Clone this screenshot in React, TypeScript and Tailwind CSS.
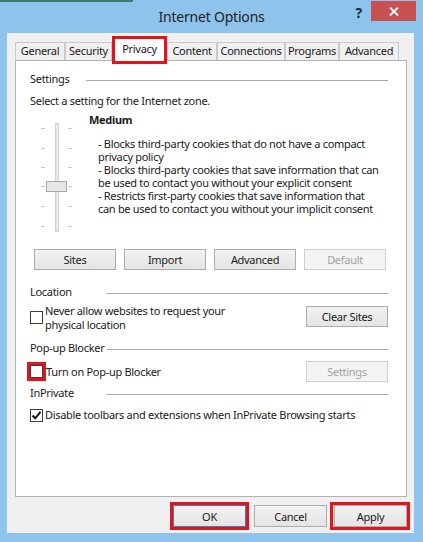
import React from "react";

function Btn({
  children,
  disabled,
  className,
}: {
  children: React.ReactNode;
  disabled?: boolean;
  className?: string;
}) {
  return (
    <div
      className={
        "flex items-center justify-center border leading-none " +
        (disabled
          ? "border-[#cfcfcf] bg-[#f4f4f4] text-[#a2a2a2] "
          : "border-[#adadad] bg-gradient-to-b from-[#f2f2f2] to-[#e4e4e4] text-[#1a1a1a] ") +
        (className ?? "")
      }
    >
      {children}
    </div>
  );
}

function Check({ checked }: { checked?: boolean }) {
  return (
    <div className="w-[13px] h-[13px] border border-[#3c3c3c] bg-white flex items-center justify-center shrink-0">
      {checked && (
        <svg width="11" height="11" viewBox="0 0 11 11">
          <path d="M1.5 5.5 L4.2 8.3 L9.5 1.8" fill="none" stroke="#111" strokeWidth="2" />
        </svg>
      )}
    </div>
  );
}

function GroupLabel({ label, w }: { label: string; w: string }) {
  return (
    <div className="flex items-center h-[14px] pr-[18px]">
      <div className={"shrink-0 leading-[14px] whitespace-nowrap " + w}>{label}</div>
      <div className="flex-1 h-px bg-[#a9a9a9] mt-[2px]" />
    </div>
  );
}

function Slider() {
  const ticks = [7, 27, 46, 65, 85, 105];
  return (
    <svg width="36" height="112" viewBox="0 0 36 112">
      {ticks.map((y) => (
        <g key={y}>
          <rect x="1" y={y} width="4" height="1" fill="#c8c8c8" />
          <rect x="28" y={y} width="4" height="1" fill="#c8c8c8" />
        </g>
      ))}
      <rect x="15.5" y="2.5" width="3" height="108" fill="#e8e8e8" stroke="#d4d4d4" />
      <rect x="6.5" y="60.5" width="20" height="10" fill="#e6e6e6" stroke="#a9a9a9" />
    </svg>
  );
}

export default function App() {
  const tabs: { label: string; w: string; sel?: boolean }[] = [
    { label: "General", w: "w-[50px]" },
    { label: "Security", w: "w-[47px]" },
    { label: "Privacy", w: "w-[55px]", sel: true },
    { label: "Content", w: "w-[50px]" },
    { label: "Connections", w: "w-[68px]" },
    { label: "Programs", w: "w-[54px]" },
    { label: "Advanced", w: "w-[60px]" },
  ];

  return (
    <div className="w-[423px] h-[542px] bg-[#8ec4ec] flex flex-col font-['Noto_Sans','Open_Sans',sans-serif] text-[11px] tracking-[-0.3px] text-[#1a1a1a] overflow-hidden">
      <div className="h-[2px] w-[133px] bg-[#3d7a70] shrink-0" />
      {/* title bar */}
      <div className="relative h-[31px] shrink-0 flex items-center justify-center">
        <div className="text-[14px] tracking-[-0.2px] text-[#222] leading-none mt-[-2px]">Internet Options</div>
        <div className="absolute right-[7px] top-[-1px] flex items-start">
          <div className="text-[14px] font-bold text-[#1b2c40] leading-none mt-[5px] mr-[9px]">?</div>
          <div className="w-[45px] h-[20px] bg-[#c75050] flex items-center justify-center">
            <svg width="10" height="9" viewBox="0 0 10 9">
              <path d="M1 0.5 L9 8.5 M9 0.5 L1 8.5" stroke="#fff" strokeWidth="1.8" />
            </svg>
          </div>
        </div>
      </div>
      {/* body */}
      <div className="ml-[7px] w-[407px] h-[500px] bg-[#f0f0f0] flex flex-col pl-[8px] pr-[7px] pt-[3px]">
        {/* tabs */}
        <div className="flex items-end h-[24px] relative z-10">
          {tabs.map((t) =>
            t.sel ? (
              <div
                key={t.label}
                className={"h-[28px] -mb-[4px] border-[3px] border-[#e0141c] bg-white flex justify-center pt-[3px] leading-[14px] " + t.w}
              >
                {t.label}
              </div>
            ) : (
              <div
                key={t.label}
                className={"h-[18px] border border-b-0 border-[#c9c9c9] bg-[#f0f0f0] flex items-center justify-center " + t.w}
              >
                {t.label}
              </div>
            )
          )}
        </div>
        {/* panel */}
        <div className="h-[437px] w-[392px] bg-white border border-[#b3b3b3] pl-[14px] pt-[11px] flex flex-col">
          <GroupLabel label="Settings" w="w-[56px]" />
          <div className="mt-[8px] leading-[14px]">Select a setting for the Internet zone.</div>
          <div className="mt-[5px] h-[120px] flex">
            <div className="w-[59px] shrink-0 pl-[10px] pt-[8px]">
              <Slider />
            </div>
            <div className="flex flex-col">
              <div className="font-bold leading-[14px]">Medium</div>
              <div className="pl-[9px] mt-[10px] leading-[13px] whitespace-nowrap">
                <div>- Blocks third-party cookies that do not have a compact</div>
                <div>privacy policy</div>
                <div>- Blocks third-party cookies that save information that can</div>
                <div>be used to contact you without your explicit consent</div>
                <div>- Restricts first-party cookies that save information that</div>
                <div>can be used to contact you without your implicit consent</div>
              </div>
            </div>
          </div>
          <div className="mt-[16px] ml-[4px] flex gap-[8px]">
            <Btn className="w-[82px] h-[21px]">Sites</Btn>
            <Btn className="w-[82px] h-[21px]">Import</Btn>
            <Btn className="w-[82px] h-[21px]">Advanced</Btn>
            <Btn disabled className="w-[82px] h-[21px]">Default</Btn>
          </div>
          <div className="mt-[15px]">
            <GroupLabel label="Location" w="w-[77px]" />
          </div>
          <div className="mt-[5px] flex pr-[18px]">
            <div className="pt-[7px]">
              <Check />
            </div>
            <div className="ml-[2px] leading-[14px] flex-1">
              <div>Never allow websites to request your</div>
              <div>physical location</div>
            </div>
            <div className="pt-[2px]">
              <Btn className="w-[82px] h-[21px]">Clear Sites</Btn>
            </div>
          </div>
          <div className="mt-[9px]">
            <GroupLabel label="Pop-up Blocker" w="w-[77px]" />
          </div>
          <div className="mt-[6px] h-[21px] flex items-center pr-[18px]">
            <div className="-ml-[3px] border-[3px] border-[#e0141c]">
              <Check />
            </div>
            <div className="leading-[14px] flex-1">Turn on Pop-up Blocker</div>
            <Btn disabled className="w-[82px] h-[21px]">Settings</Btn>
          </div>
          <div className="mt-[4px]">
            <GroupLabel label="InPrivate" w="w-[77px]" />
          </div>
          <div className="mt-[8px] flex items-center h-[14px]">
            <Check checked />
            <div className="ml-[2px] leading-[14px] whitespace-nowrap">
              Disable toolbars and extensions when InPrivate Browsing starts
            </div>
          </div>
        </div>
        {/* bottom buttons */}
        <div className="mt-[8px] flex justify-end items-center">
          <div className="relative">
            <Btn className="w-[73px] h-[22px] !border-[#3c7fb1]">OK</Btn>
            <div className="absolute -inset-[3px] border-[3px] border-[#e0141c] pointer-events-none" />
          </div>
          <Btn className="w-[73px] h-[22px] ml-[8px]">Cancel</Btn>
          <div className="relative ml-[7px]">
            <Btn className="w-[73px] h-[22px]">Apply</Btn>
            <div className="absolute -top-[3px] -bottom-[3px] -left-[4px] -right-[3px] border-[3px] border-[#e0141c] pointer-events-none" />
          </div>
        </div>
      </div>
    </div>
  );
}
